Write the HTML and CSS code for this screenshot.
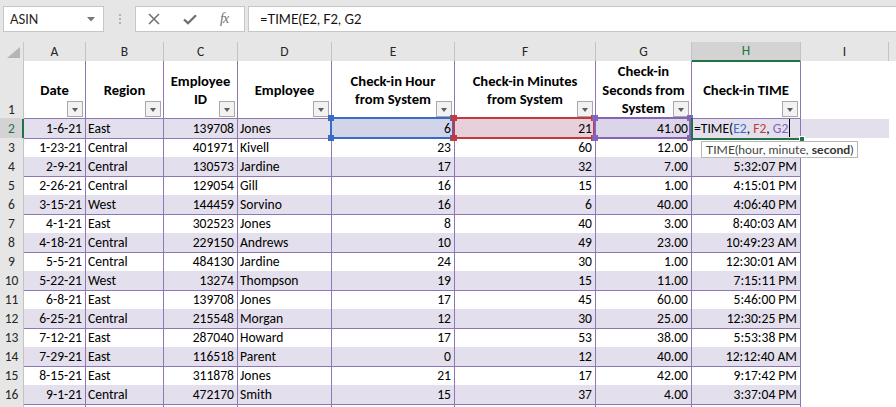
FILE: index.html
```html
<!DOCTYPE html>
<html>
<head>
<meta charset="utf-8">
<link rel="stylesheet" href="styles.css">
</head>
<body>
<div class="topbar">
  <div class="namebox"><span>ASIN</span><svg class="dd" width="8" height="5" viewBox="0 0 8 5"><path d="M0 0H8L4 4.5Z" fill="#777"/></svg></div>
  <div class="grip"><i></i><i></i><i></i></div>
  <div class="fxbox">
    <svg width="12" height="12" viewBox="0 0 12 12"><path d="M1 1L11 11M11 1L1 11" stroke="#6f6f6f" stroke-width="1.5" fill="none"/></svg>
    <svg width="14" height="11" viewBox="0 0 14 11"><path d="M1 5.5L5 9.2L13 1.2" stroke="#6f6f6f" stroke-width="2.3" fill="none"/></svg>
    <span class="fx">fx</span>
  </div>
  <div class="formula">=TIME(E2, F2, G2</div>
</div>
<div class="sheet">
  <div class="row colhdr">
    <div class="corner"><svg width="13" height="11" viewBox="0 0 13 11"><path d="M13 0V11H0Z" fill="#b5b5b5"/></svg></div>
    <div class="ch">A</div><div class="ch">B</div><div class="ch">C</div><div class="ch">D</div><div class="ch">E</div><div class="ch">F</div><div class="ch">G</div><div class="ch active">H</div><div class="ch">I</div><div class="ch fill"></div>
  </div>
  <div class="row hdr">
    <div class="rh">1</div>
    <div class="c h"><span class="ht">Date</span><span class="fb"></span></div>
    <div class="c h"><span class="ht">Region</span><span class="fb"></span></div>
    <div class="c h"><span class="ht">Employee<br>ID</span><span class="fb"></span></div>
    <div class="c h"><span class="ht">Employee</span><span class="fb"></span></div>
    <div class="c h"><span class="ht">Check-in Hour<br>from System</span><span class="fb"></span></div>
    <div class="c h"><span class="ht">Check-in Minutes<br>from System</span><span class="fb"></span></div>
    <div class="c h"><span class="ht">Check-in<br>Seconds from<br>System</span><span class="fb"></span></div>
    <div class="c h"><span class="ht">Check-in TIME</span><span class="fb"></span></div>
    <div class="x"></div><div class="x"></div>
  </div>
  <div class="row band">
    <div class="rh cur">2</div>
    <div class="c r">1-6-21</div><div class="c">East</div><div class="c r">139708</div><div class="c">Jones</div>
    <div class="c r selc e2"><span class="box blue"><i class="tl"></i><i class="tr"></i><i class="bl"></i><i class="br"></i></span>6</div>
    <div class="c r selc f2"><span class="box red"><i class="tl"></i><i class="tr"></i><i class="bl"></i><i class="br"></i></span>21</div>
    <div class="c r selc g2"><span class="box purple"><i class="tl"></i><i class="tr"></i><i class="bl"></i><i class="br"></i></span>41.00</div>
    <div class="c edit"><span class="activebox"><i></i></span>=TIME(<span class="rb">E2</span>, <span class="rr">F2</span>, <span class="rp">G2</span><span class="caret"></span><span class="tip">TIME(hour, minute, <b>second</b>)</span></div>
    <div class="x bandx"></div><div class="x"></div>
  </div>
  <div class="row"><div class="rh">3</div><div class="c r">1-23-21</div><div class="c">Central</div><div class="c r">401971</div><div class="c">Kivell</div><div class="c r">23</div><div class="c r">60</div><div class="c r">12.00</div><div class="c r"></div><div class="x"></div><div class="x"></div></div>
  <div class="row band"><div class="rh">4</div><div class="c r">2-9-21</div><div class="c">Central</div><div class="c r">130573</div><div class="c">Jardine</div><div class="c r">17</div><div class="c r">32</div><div class="c r">7.00</div><div class="c r">5:32:07 PM</div><div class="x"></div><div class="x"></div></div>
  <div class="row"><div class="rh">5</div><div class="c r">2-26-21</div><div class="c">Central</div><div class="c r">129054</div><div class="c">Gill</div><div class="c r">16</div><div class="c r">15</div><div class="c r">1.00</div><div class="c r">4:15:01 PM</div><div class="x"></div><div class="x"></div></div>
  <div class="row band"><div class="rh">6</div><div class="c r">3-15-21</div><div class="c">West</div><div class="c r">144459</div><div class="c">Sorvino</div><div class="c r">16</div><div class="c r">6</div><div class="c r">40.00</div><div class="c r">4:06:40 PM</div><div class="x"></div><div class="x"></div></div>
  <div class="row"><div class="rh">7</div><div class="c r">4-1-21</div><div class="c">East</div><div class="c r">302523</div><div class="c">Jones</div><div class="c r">8</div><div class="c r">40</div><div class="c r">3.00</div><div class="c r">8:40:03 AM</div><div class="x"></div><div class="x"></div></div>
  <div class="row band"><div class="rh">8</div><div class="c r">4-18-21</div><div class="c">Central</div><div class="c r">229150</div><div class="c">Andrews</div><div class="c r">10</div><div class="c r">49</div><div class="c r">23.00</div><div class="c r">10:49:23 AM</div><div class="x"></div><div class="x"></div></div>
  <div class="row"><div class="rh">9</div><div class="c r">5-5-21</div><div class="c">Central</div><div class="c r">484130</div><div class="c">Jardine</div><div class="c r">24</div><div class="c r">30</div><div class="c r">1.00</div><div class="c r">12:30:01 AM</div><div class="x"></div><div class="x"></div></div>
  <div class="row band"><div class="rh">10</div><div class="c r">5-22-21</div><div class="c">West</div><div class="c r">13274</div><div class="c">Thompson</div><div class="c r">19</div><div class="c r">15</div><div class="c r">11.00</div><div class="c r">7:15:11 PM</div><div class="x"></div><div class="x"></div></div>
  <div class="row"><div class="rh">11</div><div class="c r">6-8-21</div><div class="c">East</div><div class="c r">139708</div><div class="c">Jones</div><div class="c r">17</div><div class="c r">45</div><div class="c r">60.00</div><div class="c r">5:46:00 PM</div><div class="x"></div><div class="x"></div></div>
  <div class="row band"><div class="rh">12</div><div class="c r">6-25-21</div><div class="c">Central</div><div class="c r">215548</div><div class="c">Morgan</div><div class="c r">12</div><div class="c r">30</div><div class="c r">25.00</div><div class="c r">12:30:25 PM</div><div class="x"></div><div class="x"></div></div>
  <div class="row"><div class="rh">13</div><div class="c r">7-12-21</div><div class="c">East</div><div class="c r">287040</div><div class="c">Howard</div><div class="c r">17</div><div class="c r">53</div><div class="c r">38.00</div><div class="c r">5:53:38 PM</div><div class="x"></div><div class="x"></div></div>
  <div class="row band"><div class="rh">14</div><div class="c r">7-29-21</div><div class="c">East</div><div class="c r">116518</div><div class="c">Parent</div><div class="c r">0</div><div class="c r">12</div><div class="c r">40.00</div><div class="c r">12:12:40 AM</div><div class="x"></div><div class="x"></div></div>
  <div class="row"><div class="rh">15</div><div class="c r">8-15-21</div><div class="c">East</div><div class="c r">311878</div><div class="c">Jones</div><div class="c r">21</div><div class="c r">17</div><div class="c r">42.00</div><div class="c r">9:17:42 PM</div><div class="x"></div><div class="x"></div></div>
  <div class="row band"><div class="rh">16</div><div class="c r">9-1-21</div><div class="c">Central</div><div class="c r">472170</div><div class="c">Smith</div><div class="c r">15</div><div class="c r">37</div><div class="c r">4.00</div><div class="c r">3:37:04 PM</div><div class="x"></div><div class="x"></div></div>
  <div class="row"><div class="rh"></div><div class="c r"></div><div class="c"></div><div class="c r"></div><div class="c"></div><div class="c r"></div><div class="c r"></div><div class="c r"></div><div class="c r"></div><div class="x"></div><div class="x"></div></div>
</div>
</body>
</html>
```
FILE: styles.css
```css
* { box-sizing: border-box; }
html, body { margin: 0; padding: 0; }
body {
  width: 896px;
  height: 407px;
  overflow: hidden;
  background: #ffffff;
  font-family: Carlito, Lato, "Liberation Sans", sans-serif;
  color: #000;
}

/* ---------- formula bar ---------- */
.topbar {
  height: 42px;
  background: #e6e6e6;
  display: flex;
  align-items: flex-start;
  padding: 6px 0 0 3px;
}
.namebox {
  width: 101px;
  height: 26px;
  background: #fff;
  border: 1px solid #c6c6c6;
  display: flex;
  align-items: center;
  justify-content: space-between;
  padding: 0 8px 0 6px;
  font-family: Lato, "Liberation Sans", sans-serif;
  font-size: 12.5px;
  color: #222;
}
.grip {
  width: 31px;
  height: 26px;
  display: flex;
  flex-direction: column;
  align-items: center;
  justify-content: center;
  gap: 2px;
}
.grip i {
  display: block;
  width: 2px;
  height: 2px;
  background: #b4b4b4;
}
.fxbox {
  width: 110px;
  height: 26px;
  background: #fff;
  border: 1px solid #c6c6c6;
  display: flex;
  align-items: center;
  padding-left: 12px;
  gap: 23px;
}
.fx {
  font-family: "Liberation Serif", serif;
  font-style: italic;
  font-size: 14px;
  color: #6f6f6f;
  letter-spacing: -1px;
}
.formula {
  flex: 1;
  margin-left: 3px;
  height: 26px;
  background: #fff;
  border: 1px solid #c6c6c6;
  border-right: none;
  padding-left: 11px;
  line-height: 24px;
  font-family: Lato, "Liberation Sans", sans-serif;
  font-size: 13px;
  color: #111;
}

/* ---------- sheet ---------- */
.row {
  display: grid;
  grid-template-columns: 24px 62px 78px 74px 94px 123px 141px 96px 109px 88px 1fr;
  height: 19px;
  font-size: 13.6px;
}
.colhdr { background: #e6e6e6; }
.corner {
  display: flex;
  align-items: flex-end;
  justify-content: flex-end;
  padding: 0 3px 4px 0;
  border-right: 1px solid #c8c8c8;
}
.ch {
  border-right: 1px solid #c3c3c3;
  text-align: center;
  line-height: 19px;
  color: #262626;
  font-size: 13.5px;
}
.ch.fill { border-right: none; }
.ch.active {
  background: #d3d3d3;
  color: #217346;
  border-bottom: 2px solid #217346;
  line-height: 18px;
}

.rh {
  background: #e6e6e6;
  border-right: 1px solid #c3c3c3;
  border-bottom: 1px solid #d6d6d6;
  text-align: center;
  color: #262626;
  line-height: 19px;
  font-size: 13.5px;
}
.rh.cur {
  background: #d3d3d3;
  color: #217346;
  border-right: 2px solid #217346;
  padding-left: 1px;
}

.c {
  position: relative;
  border-right: 1px solid #8f77b5;
  border-bottom: 1px solid #8f77b5;
  padding: 0 2px;
  line-height: 19px;
  white-space: nowrap;
}
.c.r { text-align: right; padding-right: 3px; }
.band .c, .band .bandx { background: #e4dfec; }

/* header row */
.hdr { height: 58px; }
.hdr .rh { display: flex; align-items: flex-end; justify-content: center; line-height: 17px; }
.c.h {
  display: flex;
  align-items: center;
  justify-content: center;
  text-align: center;
  font-weight: bold;
  font-size: 14.6px;
  line-height: 18.5px;
  padding: 1px 0 0;
  white-space: nowrap;
}
.ht { display: block; }
.fb {
  position: absolute;
  right: 2px;
  bottom: 1px;
  width: 16px;
  height: 16px;
  background: #f2f2f2;
  border: 1px solid #a9a9a9;
}
.fb::after {
  content: "";
  position: absolute;
  left: 4px;
  top: 6px;
  border-left: 3.5px solid transparent;
  border-right: 3.5px solid transparent;
  border-top: 4px solid #5e5e5e;
}

/* selection boxes */
.band .selc.e2 { background: #d2d4ea; }
.band .selc.f2 { background: #e7d0d9; }
.band .selc.g2 { background: #dcd5ea; }
.box {
  position: absolute;
  left: -2px;
  top: -2px;
  right: 0;
  bottom: -1px;
  border: 2px solid;
  z-index: 2;
}
.box.blue { border-color: #3b6cc5; }
.box.red { border-color: #c2393e; }
.box.purple { border-color: #8463b8; }
.box i {
  position: absolute;
  width: 6px;
  height: 6px;
}
.box.blue i { background: #3b6cc5; }
.box.red i { background: #c2393e; }
.box.purple i { background: #8463b8; }
.box .tl { left: -4px; top: -4px; }
.box .tr { right: -4px; top: -4px; }
.box .bl { left: -4px; bottom: -4px; }
.box .br { right: -4px; bottom: -4px; }

.c.edit {
  overflow: visible;
  padding-left: 2px;
  z-index: 3;
}
.activebox {
  position: absolute;
  left: -1px;
  top: -1px;
  right: -2px;
  bottom: -2px;
  border-left: 2px solid #217346;
  border-bottom: 2px solid #217346;
}
.activebox i {
  position: absolute;
  right: -3px;
  bottom: -4px;
  width: 6px;
  height: 6px;
  background: #217346;
  border: 1px solid #fff;
}
.rb { color: #3b6cc5; }
.rr { color: #c2393e; }
.rp { color: #8463b8; }
.caret {
  display: inline-block;
  width: 1px;
  height: 18px;
  background: #000;
  vertical-align: top;
  margin-left: 1px;
}
.tip {
  position: absolute;
  left: 9px;
  top: 22px;
  height: 17px;
  padding: 0 4px;
  background: #fff;
  border: 1px solid #b9b9b9;
  font-family: Lato, "Liberation Sans", sans-serif;
  font-size: 12.2px;
  line-height: 15px;
  color: #444;
  white-space: nowrap;
  z-index: 5;
}
.tip b { color: #333; }

.x { background: #fff; }
```
